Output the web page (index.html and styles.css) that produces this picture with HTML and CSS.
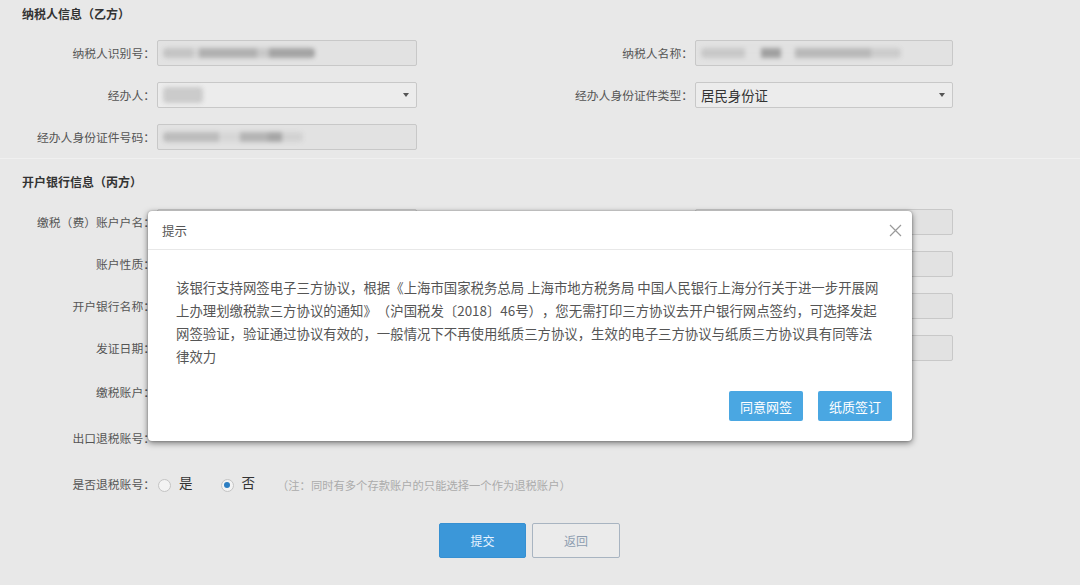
FILE: index.html
```html
<!DOCTYPE html>
<html lang="zh-CN">
<head>
<meta charset="utf-8">
<title>三方协议签订</title>
<link rel="stylesheet" href="styles.css">
</head>
<body>
<div class="page">
  <section class="sec sec-top">
    <h3 class="sec-title">纳税人信息（乙方）</h3>
    <div class="grid">
      <label class="lbl">纳税人识别号：</label>
      <div class="field disabled"><span class="blur b1"></span></div>
      <label class="lbl">纳税人名称：</label>
      <div class="field disabled"><span class="blur b2"></span></div>

      <label class="lbl">经办人：</label>
      <div class="field select"><span class="blur b3"></span><i class="caret"></i></div>
      <label class="lbl">经办人身份证件类型：</label>
      <div class="field select"><span class="val">居民身份证</span><i class="caret"></i></div>

      <label class="lbl">经办人身份证件号码：</label>
      <div class="field disabled"><span class="blur b4"></span></div>
    </div>
  </section>

  <section class="sec sec-bank">
    <h3 class="sec-title">开户银行信息（丙方）</h3>
    <div class="grid grid-bank">
      <label class="lbl">缴税（费）账户户名：</label>
      <div class="field disabled"></div>
      <div class="spacer"></div>
      <div class="field disabled"></div>

      <label class="lbl">账户性质：</label>
      <div class="field disabled"></div>
      <div class="spacer"></div>
      <div class="field disabled"></div>

      <label class="lbl">开户银行名称：</label>
      <div class="field disabled"></div>
      <div class="spacer"></div>
      <div class="field disabled"></div>

      <label class="lbl">发证日期：</label>
      <div class="field disabled"></div>
      <div class="spacer"></div>
      <div class="field disabled"></div>

      <label class="lbl">缴税账户：</label>
      <div class="spacer"></div>
      <div class="spacer"></div>
      <div class="spacer"></div>

      <label class="lbl">出口退税账号：</label>
      <div class="spacer"></div>
      <div class="spacer"></div>
      <div class="spacer"></div>

      <label class="lbl">是否退税账号：</label>
      <div class="radios">
        <span class="radio"></span><span class="opt">是</span>
        <span class="radio checked"></span><span class="opt opt-last">否</span>
        <span class="note">（注：同时有多个存款账户的只能选择一个作为退税账户）</span>
      </div>
    </div>
    <div class="actions">
      <button class="btn btn-primary">提交</button>
      <button class="btn btn-back">返回</button>
    </div>
  </section>
</div>

<div class="modal">
  <div class="modal-head">
    <span class="modal-title">提示</span>
    <span class="close" aria-label="关闭">
      <svg width="13" height="13" viewBox="0 0 13 13"><path d="M1 1 L12 12 M12 1 L1 12" stroke="#9a9a9a" stroke-width="1.2" fill="none"/></svg>
    </span>
  </div>
  <div class="modal-body">
    该银行支持网签电子三方协议，根据《上海市国家税务总局 上海市地方税务局 中国人民银行上海分行关于进一步开展网<br>上办理划缴税款三方协议的通知》（沪国税发〔2018〕46号），您无需打印三方协议去开户银行网点签约，可选择发起<br>网签验证，验证通过协议有效的，一般情况下不再使用纸质三方协议，生效的电子三方协议与纸质三方协议具有同等法<br>律效力
  </div>
  <div class="modal-foot">
    <button class="mbtn">同意网签</button>
    <button class="mbtn">纸质签订</button>
  </div>
</div>
</body>
</html>
```

FILE: styles.css
```css
* { box-sizing: border-box; }
html, body { margin: 0; padding: 0; }
body {
  width: 1080px;
  height: 585px;
  overflow: hidden;
  position: relative;
  background: #e8e8e8;
  font-family: "Noto Sans CJK SC", "Noto Sans", sans-serif;
  color: #555;
  text-spacing-trim: space-all;
}

.sec-title {
  margin: 0 0 18px 22px;
  font-size: 12px;
  line-height: 16px;
  font-weight: bold;
  color: #333;
}
.sec-top {
  padding-top: 6px;
  padding-bottom: 8px;
  border-bottom: 1px solid #f0f0f0;
}
.sec-bank { padding-top: 15px; }
.sec-bank .sec-title { margin-bottom: 19px; }

.grid {
  display: grid;
  grid-template-columns: 157px 260px 278px 258px;
  grid-auto-rows: 26px;
  row-gap: 16px;
}
.grid-bank { grid-template-rows: repeat(4, 26px) repeat(3, 30px); }

.lbl {
  text-align: right;
  padding-right: 2px;
  font-size: 11.8px;
  line-height: 26px;
  white-space: nowrap;
  color: #555;
  align-self: center;
}

.field {
  position: relative;
  height: 26px;
  border: 1px solid #c8c8c8;
  border-radius: 2px;
  background: #e2e2e2;
  display: flex;
  align-items: center;
  padding-left: 5px;
  align-self: center;
}
.field.select { background: #ececec; }
.val { font-size: 13.4px; color: #333; }
.caret {
  position: absolute;
  right: 7px;
  top: 10px;
  border-left: 3.5px solid transparent;
  border-right: 3.5px solid transparent;
  border-top: 4px solid #555;
}

.blur {
  display: block;
  height: 10px;
  border-radius: 4px;
  filter: blur(2.2px);
}
.b1 { width: 152px; background: linear-gradient(90deg, #c4c4c4 0 20%, #d4d4d4 20% 24%, #b0b0b0 24% 62%, #c8c8c8 62% 70%, #a4a4a4 70% 100%); }
.b2 { width: 200px; background: linear-gradient(90deg, #c8c8c8 0 22%, #e0e0e0 22% 30%, #a0a0a0 30% 40%, #e0e0e0 40% 47%, #b8b8b8 47% 85%, #cccccc 85% 100%); }
.b3 { width: 40px; height: 16px; background: #cbcbcb; }
.b4 { width: 140px; background: linear-gradient(90deg, #bcbcbc 0 40%, #d6d6d6 40% 55%, #b4b4b4 55% 75%, #a6a6a6 75% 85%, #d2d2d2 85% 100%); }

.radios {
  grid-column: 2 / span 3;
  display: flex;
  align-items: center;
  padding-left: 1px;
}
.radio {
  width: 13px;
  height: 13px;
  border-radius: 50%;
  border: 1px solid #c4c4c4;
  background: #f3f3f3;
  position: relative;
  margin-top: 2px;
}
.radio.checked::after {
  content: "";
  position: absolute;
  left: 2.5px;
  top: 2.5px;
  width: 6px;
  height: 6px;
  border-radius: 50%;
  background: #2c7ec2;
}
.opt {
  font-size: 13.5px;
  color: #333;
  margin: -5px 28px 0 8px;
}
.opt-last { margin-right: 22px; }
.note {
  font-size: 11.3px;
  color: #ababab;
  margin-top: 1px;
}

.actions {
  display: flex;
  justify-content: center;
  gap: 6px;
  padding-right: 21px;
  margin-top: 24px;
}
.btn {
  width: 87px;
  height: 35px;
  border-radius: 2px;
  font-family: inherit;
  font-size: 12px;
  cursor: pointer;
}
.btn-primary {
  background: #3b97d9;
  border: 1px solid #3690d2;
  color: #e6f3ff;
}
.btn-back {
  width: 88px;
  background: #ebebeb;
  border: 1px solid #a8b4c1;
  color: #8d9db0;
}

/* dialog overlay */
.modal {
  position: absolute;
  left: 148px;
  top: 211px;
  width: 764px;
  background: #fff;
  border-radius: 4px;
  box-shadow: 0 2px 6px rgba(0, 0, 0, 0.5), 0 0 2px rgba(0, 0, 0, 0.3);
}
.modal-head {
  height: 39px;
  border-bottom: 1px solid #e8e8e8;
  display: flex;
  align-items: center;
  justify-content: space-between;
  padding: 0 10px 0 14px;
}
.modal-title {
  font-size: 12.5px;
  color: #555;
}
.close { display: flex; }
.modal-body {
  padding: 26px 20px 0 28px;
  font-size: 13.4px;
  line-height: 23px;
  color: #555;
  white-space: nowrap;
}
.modal-foot {
  display: flex;
  justify-content: flex-end;
  gap: 15px;
  padding: 23px 20px 20px;
}
.mbtn {
  width: 74px;
  height: 30px;
  border: 0;
  border-radius: 2px;
  background: #4aa7e2;
  color: #fff;
  font-family: inherit;
  font-size: 13px;
  cursor: pointer;
}
```
